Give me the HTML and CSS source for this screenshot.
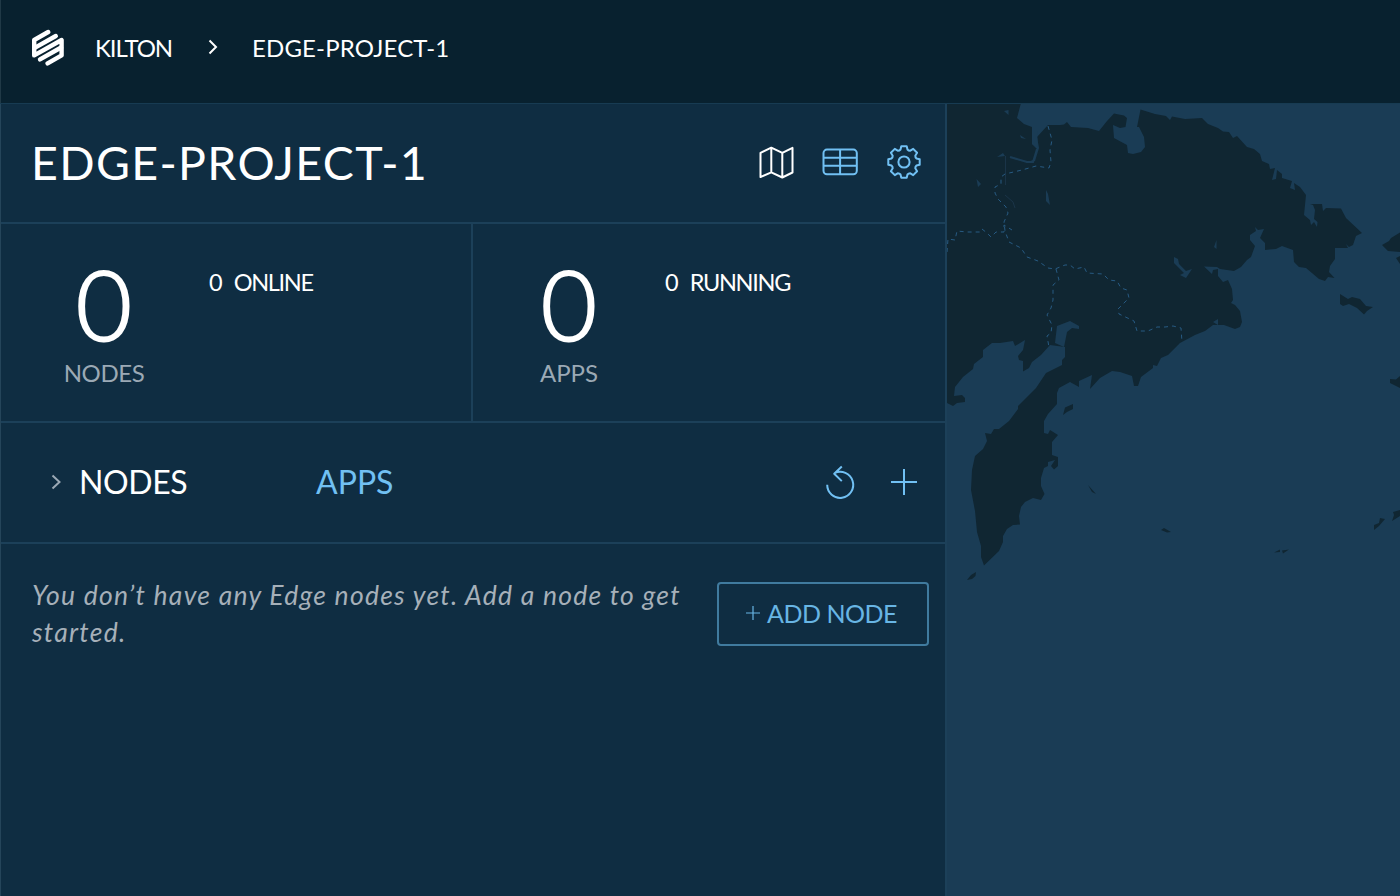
FILE: index.html
```html
<!DOCTYPE html>
<html lang="en">
<head>
<meta charset="utf-8">
<title>Edge-Project-1</title>
<link rel="stylesheet" href="styles.css">
</head>
<body>
<div class="app">
  <header class="topbar">
    <svg class="logo" viewBox="0 0 34 38" width="34" height="38" fill="none" stroke="#fff" stroke-width="4.4" stroke-linecap="round" stroke-linejoin="round">
      <path d="M17.200 3 3.200 11V26.400L30.600 11V26.400L16.600 34.400"/>
      <path d="M24.800 7 3.700 18.900M9 30.400 30.100 18.500"/>
    </svg>
    <nav class="crumbs">
      <a class="crumb crumb-org">KILTON</a>
      <svg class="crumb-sep" viewBox="0 0 10 16" width="10" height="16" fill="none" stroke="#fff" stroke-width="2"><path d="M1.500 1.500 8 8l-6.500 6.500"/></svg>
      <a class="crumb crumb-project">EDGE-PROJECT-1</a>
    </nav>
  </header>
  <main class="content">
    <section class="panel">
      <div class="title-row">
        <h1 class="title">EDGE-PROJECT-1</h1>
        <div class="views">
          <svg class="icon icon-active" viewBox="-0.500 -0.700 36 36" width="36" height="36"><path d="M2 8.200 12.800 3l11 5.200L34 3.200v24.600l-10.200 5L12.800 27.600 2 32.300zM12.800 3v24.600M23.800 8.200v24.600"/></svg>
          <svg class="icon" viewBox="0 0 36 36" width="36" height="36"><rect x="1.500" y="5.600" width="33.300" height="24.600" rx="3.500"/><path d="M1.500 13.800h33.300M1.500 21.800h33.300M18.100 5.600v24.600"/></svg>
          <svg class="icon" viewBox="-18 -18 36 36" width="36" height="36"><circle r="5.600"/><path d="M-2.700-15.700H2.700L3.500-12.500Q4.600-11.200 6.300-11.300L9.200-13.100 13.100-9.200 11.300-6.300Q11.200-4.600 12.500-3.500L15.700-2.700V2.700L12.500 3.500Q11.200 4.600 11.300 6.300L13.100 9.200 9.200 13.100 6.300 11.300Q4.600 11.200 3.500 12.500L2.700 15.700H-2.700L-3.500 12.500Q-4.600 11.200-6.300 11.300L-9.200 13.100-13.100 9.200-11.300 6.300Q-11.200 4.600-12.500 3.500L-15.700 2.700V-2.700L-12.500-3.500Q-11.200-4.600-11.300-6.300L-13.100-9.200-9.200-13.100-6.300-11.300Q-4.600-11.200-3.500-12.500Z"/></svg>
        </div>
      </div>
      <div class="stats">
        <div class="stat stat-nodes">
          <div class="total"><span class="number">0</span><span class="label">NODES</span></div>
          <div class="state"><span>0</span><span class="state-name">ONLINE</span></div>
        </div>
        <div class="stat stat-apps">
          <div class="total"><span class="number">0</span><span class="label label-apps">APPS</span></div>
          <div class="state"><span>0</span><span class="state-name">RUNNING</span></div>
        </div>
      </div>
      <div class="tabs">
        <svg class="tab-arrow" viewBox="0 0 10 16" width="10" height="16"><path d="M1.500 1.500 8.500 8l-7 6.500"/></svg>
        <a class="tab tab-selected">NODES</a>
        <a class="tab tab-apps">APPS</a>
        <div class="actions">
          <svg class="icon" viewBox="0 0 36 36" width="36" height="36"><path d="M5.200 20.800A13 13 0 1 0 12.500 9.200M19.800 2.500l-7.600 7.200 7.600 7.400"/></svg>
          <svg class="icon" viewBox="0 0 36 36" width="36" height="36"><path d="M5 18h26M18 5v26"/></svg>
        </div>
      </div>
      <div class="empty">
        <p class="empty-text">You don’t have any Edge nodes yet. Add a node to get<br>started.</p>
        <button class="add"><svg viewBox="0 0 14 14" width="14" height="14"><path d="M0 7h14M7 0v14"/></svg><span>ADD NODE</span></button>
      </div>
    </section>
    <aside class="map">
      <svg class="map-svg" viewBox="947 104 453 792" width="453" height="792">
        <g class="land">
          <path d="M945 103H1021L1017 118 1024 124 1032 127V144L1037 149 1033 160 1028 162 1009 156 1028 163 1035 161 1039 148 1037 137 1048 125H1055L1060 125 1064 124.500 1067 122 1071 127 1088 128 1099 131 1107 121 1114 113.500 1124 115.500 1127 118 1125.500 127 1120 128 1113 125 1114 138 1127 145 1128 153 1133 154 1141 152 1145 147 1144 137 1139 127H1137L1139 117 1140.500 109.500 1155 114 1166 116 1170 120 1172 116.500 1185 119 1202 118 1208 124 1218 128 1223 131.500 1229 132 1233 138 1237 136 1247 147 1254 149 1260 154 1262 161 1269 164 1270 169 1275 168 1272 180 1276 179 1277 170 1282 174V178L1292 181 1290 188 1295 190 1294 183 1300 187 1306 195 1304 215 1310 220 1311 225 1314 222 1317 227 1317.500 222 1314 219 1315 210 1313 205 1310 204H1322L1323 211 1326 208 1341 208.500 1346 218 1362 233 1356 236 1353 245 1349 247 1346 244 1348 248H1335V259L1330 266 1329 272 1334.500 278 1328 277 1325 281 1319 279 1306 268 1299 267 1294 262 1293 250 1282 246 1276 249 1265 250V243L1260 238 1264 229 1258 230 1255 227 1256 231 1250 235V240L1255 246 1251 257 1247 260 1241 267 1234 271 1220 269 1217 267 1204 266.500 1212 274 1213 270 1218 269V276L1223 282 1228 280 1232 289 1233 300 1231 303 1235 305 1240 311 1242 322 1240 327 1235 329 1224 325H1213L1205 331 1195 335 1180 343 1168 355 1161 358 1157 366 1153 365V368L1141 377 1138 386H1134L1132 376 1120 372 1112 371 1100 378 1090 389 1092 375 1079 381V387L1070 382 1059 388 1057 393V404L1048 414 1044 421V433L1048 434 1050 430 1058 435 1052 442V455L1058 457V466L1054 469.500 1051 466 1055 460 1048 462 1048 466 1044 468 1041 478V486L1044.500 494 1041 500 1033 498 1025 502 1021 507 1019 516 1020 524.500 1013 525 1007 529 1003 536V542L999 551 984 565.500 981 557V546L977 532 975 511 971 490 972 470 975 456 983 449 987 441 985 433 991 434 994 429H999L1009 421 1018 409V406L1036 388 1046 373 1062 365V360L1065 357V347L1050 345 1041 355 1032 362 1029 368 1023 371.500V361L1019 360 1018 356 1023 350 1025 340 1015 346 1013 341 1000 343H992L983 350V357L974 364 973 369 963 377 955 387 954 396 962 395 965 398V402L957 403 953 406 947 403H945z"/>
          <path d="M1063 415 1065 407.500 1073 404V409L1067 412zM967 580 971 575 976 572 975.500 576 972 579zM1088 485 1096 494 1092 492zM1161 530 1164 528 1171 532 1167 532.500zM1340 294 1348 299 1352 297 1360 299 1366 306 1373 307 1367 311 1364 314.500 1357 308 1349 304 1343 306 1340 304zM1382 245 1389 241 1391 238 1400 232.500V252L1388 251zM1396 258 1400 256V264zM1390 379 1396 379.500 1400 376V388L1390 383zM1374 530V525L1379 523 1380 518 1385 519 1379 526zM1392 521 1394 515 1393 512 1400 510V516zM1274 552.500 1280 549.500V552zM1282 550.500 1289 549.500 1283 553.500z"/>
        </g>
        <g class="water">
          <path d="M1057 326 1070 321 1079 326V329L1072 328 1067 332 1064 347 1055 343zM1004 111 1008.500 110V115zM1020 135 1026 139 1021 138zM997 157 1003 153 1005 156zM976.500 179 981 184 978 187zM1046 190 1048 194 1050 205 1046 201zM1174 257 1178 259 1179 264 1186 271 1192 269 1186 278 1180 275 1184 273 1174 263zM1216.500 240V249L1214 247zM1213 322 1218 319V325zM1032 131H1037L1038 148 1032 144z"/>
          <path class="channel" d="M1010 157 1027 162H1033L1037 149"/>
        </g>
        <path class="river" d="M1005.500 156V185M1005 195 1013 202 1015 208"/>
        <g class="border-lines">
          <path d="M1048 126 1052 140 1050 150 1051 162 1049 168 1036 166 1022 170 1005 174 1001 177V184L995 187V193L998 199 1006 207 1008 213 1004 222 1005 231 1009 242 1021 248 1027 257 1038 261 1048 268 1055 269 1065 265H1070L1075 269 1084 267 1087 273 1103 274 1109 280 1117 281 1121 288 1127 290 1129 298 1118 309 1119 314 1134 321 1137 331H1148L1157 327H1165L1173 326 1181 328 1182 342"/>
          <path d="M947 252 948 239 955 240 957 231 967 232 980 232 982 229 987 233 991 237 996 232 1004 232 1004 225 1012 230"/>
          <path d="M1056 269 1059 280 1053 285 1053 300 1051 308 1047 315 1052 325 1051 333 1047 336 1049 347"/>
        </g>
      </svg>
    </aside>
  </main>
</div>
</body>
</html>
```
FILE: styles.css
```css
* { box-sizing: border-box; }
body {
  margin: 0;
  background: #0f2d42;
  color: #fff;
  font-family: Lato, "Open Sans", sans-serif;
}
.app { display: flex; flex-direction: column; height: 896px; overflow: hidden; }
.topbar { display: flex; align-items: flex-start; height: 103px; padding: 29px 0 0 30px; background: #08212f; border-left: 1px solid #203946; }
.logo { flex: none; }
.crumbs { display: flex; align-items: center; height: 38px; margin-left: 30px; font-size: 24px; line-height: 38px; }
.crumb { white-space: nowrap; }
.crumb-org { width: 79px; letter-spacing: -1.1px; }
.crumb-project { letter-spacing: 0.15px; }
.crumb-sep { margin: 0 34px 3px; }
.content { display: flex; flex: 1; border-top: 1px solid #173b52; }
.panel { width: 947px; flex: none; border-right: 2px solid #1c4059; border-left: 1px solid #25455a; }
.title-row { display: flex; align-items: flex-start; justify-content: space-between; height: 120px; padding: 30px 23px 0 31px; border-bottom: 2px solid #1c4059; }
.title { margin: -1px 0 0 -1px; font-size: 46.5px; font-weight: 400; line-height: 58px; letter-spacing: 1.35px; white-space: nowrap; }
.views, .actions { display: flex; gap: 28px; padding-top: 10px; }
.icon { fill: none; stroke: #71c0f3; stroke-width: 2; stroke-linejoin: round; }
.icon-active { stroke: #fff; }
.stats { display: flex; height: 199px; border-bottom: 2px solid #1c4059; }
.stat { display: flex; padding-top: 32px; width: 472px; }
.stat-nodes { border-right: 2px solid #1c4059; padding-left: 43px; }
.stat-apps { padding-left: 36px; }
.total { display: flex; flex-direction: column; align-items: center; width: 120px; }
.number { height: 100px; font-size: 97px; font-weight: 300; line-height: 95px; -webkit-text-stroke: 2px #fff; }
.label { color: #9ba9b5; font-size: 24px; line-height: 34px; letter-spacing: -0.4px; }
.label-apps { letter-spacing: 0; }
.state { display: flex; gap: 11px; margin: 11px 0 0 45px; font-size: 23.5px; line-height: 31px; }
.state-name { letter-spacing: -1.3px; }
.stat-apps .state { margin-left: 36px; }
.tabs { display: flex; align-items: center; height: 121px; padding: 0 23px 2px 50px; border-bottom: 2px solid #1c4059; }
.tab-arrow { fill: none; stroke: #9ba9b5; stroke-width: 2; margin-right: 18px; }
.tab { font-size: 32px; line-height: 38px; padding-top: 1px; color: #71c0f3; }
.tab-selected { width: 237px; color: #fff; letter-spacing: -0.4px; }
.actions { margin-left: auto; padding-top: 0; }
.empty { display: flex; justify-content: space-between; align-items: flex-start; padding: 32px 16px 0 31px; }
.empty-text { margin: 1px 0 0; color: #a6b0b9; font-size: 26.5px; font-style: italic; line-height: 37px; letter-spacing: 1.25px; white-space: nowrap; }
.add { display: flex; align-items: center; justify-content: center; width: 212px; height: 64px; margin-top: 6px; padding: 0 3px 2px 0; gap: 7px; border: 2px solid #407b9f; border-radius: 4px; background: none; color: #68b5e4; font: 25px Lato, sans-serif; letter-spacing: -0.5px; white-space: nowrap; }
.add svg { fill: none; stroke: #68b5e4; stroke-width: 1.200; }
.map { width: 453px; background: #1a3c55; overflow: hidden; }
.map-svg { display: block; }
.land { fill: #102632; }
.water { fill: #1a3c55; }
.channel { fill: none; stroke: #1a3c55; stroke-width: 2; }
.river { fill: none; stroke: #1a3448; stroke-width: 1; }
.border-lines { fill: none; stroke: #275a82; stroke-width: 1; stroke-dasharray: 4 4; }
```
